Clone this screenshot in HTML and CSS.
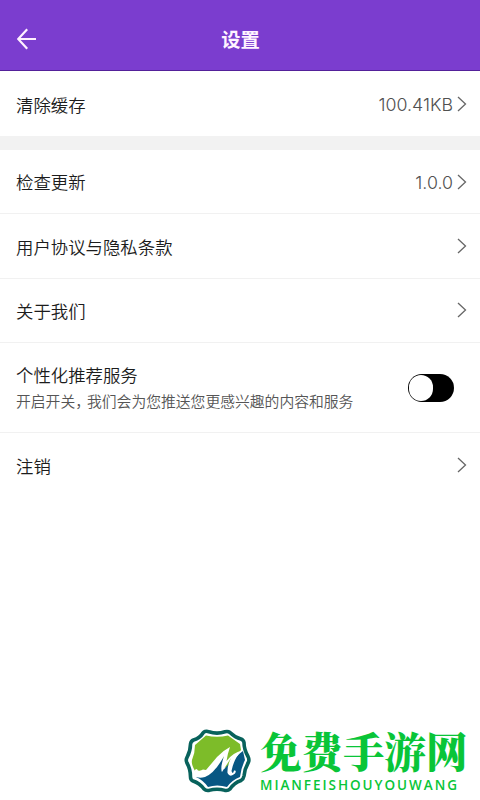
FILE: index.html
```html
<!DOCTYPE html>
<html lang="zh-CN">
<head>
<meta charset="utf-8">
<title>设置</title>
<link rel="stylesheet" href="styles.css">
</head>
<body>
<header class="bar">
  <svg class="back" width="20" height="22" viewBox="0 0 20 22"><path d="M10.2 1.3L1.2 11l9 9.7M1.5 11H19"/></svg>
  <h1>设置</h1>
</header>
<main>
  <div class="row first"><span>清除缓存</span><span class="value">100.41KB</span><svg class="chev" viewBox="0 0 10 16"><path d="M1 1l7.5 7L1 15"/></svg></div>
  <div class="gap"></div>
  <div class="row"><span>检查更新</span><span class="value">1.0.0</span><svg class="chev" viewBox="0 0 10 16"><path d="M1 1l7.5 7L1 15"/></svg></div>
  <div class="row"><span>用户协议与隐私条款</span><svg class="chev" viewBox="0 0 10 16"><path d="M1 1l7.5 7L1 15"/></svg></div>
  <div class="row"><span>关于我们</span><svg class="chev" viewBox="0 0 10 16"><path d="M1 1l7.5 7L1 15"/></svg></div>
  <div class="row tall">
    <div><div class="name">个性化推荐服务</div><div class="note">开启开关<span class="comma">，</span>我们会为您推送您更感兴趣的内容和服务</div></div>
    <div class="switch"><div class="knob"></div></div>
  </div>
  <div class="row last"><span>注销</span><svg class="chev" viewBox="0 0 10 16"><path d="M1 1l7.5 7L1 15"/></svg></div>
</main>
<footer class="brand">
  <svg width="68" height="68" viewBox="0 0 68 68">
    <path d="M21 4.5Q23 4 25 4.8Q33 7.500 41 4.800Q44 4 46 5.500Q51 10.500 57 12Q59.500 13 60 15.500Q60 22.500 64 29.500Q65.500 32.500 64.500 35Q60.500 42 60 49Q59.500 52 57 53.500Q50 56 46 62Q44 64 41 63.400Q33 61 25 63.400Q22 64 20 62Q15.500 56 9 54Q6.500 53 6.500 50Q6.500 42 3 36Q1.500 33 3 30.500Q6.500 24 6.500 17Q7 14 9.500 13Q16 11 19 6Q20 4.800 21 4.500Z" fill="#fff" stroke="#08625c" stroke-width="3.6"/>
    <path d="M11 44Q7 37 8 33Q11 26 11 18L22 8.500Q33 11 44 8.500L56 17L57 23L43 40L20 48Z" fill="#7dbc29"/>
    <path d="M12 50L26 46L40 30L40 42L55 27L59 24L61 33Q57 41 56 50Q48 53 43 60Q33 57 24 60Q19 53 12 50Z" fill="#075783"/>
    <path d="M10.500 43.500Q12.500 40.500 14 43.500Q17 44 19 42.500L22 43Q28 36 33 30Q39 23.500 46 20Q43.500 27 42.500 34Q49 25.500 58 23.500Q50 31 47.500 44Q49 48 50 43.500Q53 43 51 46.500Q46 51 43.500 46Q43 39 47 31L38 45Q36 41 40 29Q31 46 21 50Q15 52 10 49Q13 47 10.500 43.500Z" fill="#fff"/>
  </svg>
  <div class="words"><div class="cn">免费手游网</div><div class="en">MIANFEISHOUYOUWANG</div></div>
</footer>
</body>
</html>
```

FILE: styles.css
```css
* { box-sizing: border-box; }
body {
  margin: 0;
  height: 800px;
  display: flex;
  flex-direction: column;
  overflow: hidden;
  background: #fff;
  color: #1c1c1c;
  font-family: "Noto Sans CJK SC", sans-serif;
  font-weight: 350;
}
.bar {
  height: 71px;
  padding: 8px 16px 0 17px;
  display: grid;
  grid-template-columns: 20px 1fr 20px;
  align-items: center;
  background: #7b3dcf;
  border-bottom: 1px solid #54219a;
}
.bar h1 {
  margin: 0;
  color: #fff3ff;
  font-size: 19.3px;
  line-height: 28px;
  font-weight: 700;
  text-align: center;
}
.back { fill: none; stroke: #fff0ff; stroke-width: 2.2; }
.row {
  height: 64.4px;
  padding: 1px 13px 0 16px;
  display: flex;
  align-items: center;
  border-bottom: 1px solid #f1f1f1;
  font-size: 17.4px;
  line-height: 26px;
}
.first { height: 65px; padding-top: 2px; border: 0; }
.gap { height: 14px; background: #f2f2f2; }
.value { margin: 1px 0 0 auto; color: #505050; font-family: Inter, sans-serif; font-size: 17.8px; font-weight: 300; }
.chev {
  width: 10px;
  height: 16px;
  flex: none;
  margin: -1px 0 0 auto;
  fill: none;
  stroke: #666;
  stroke-width: 1.3;
}
.value + .chev { margin-left: 4px; }
.tall { height: 90px; justify-content: space-between; padding-right: 26px; }
.note { color: #555; font-size: 14.8px; line-height: 26px; white-space: nowrap; }
.comma { letter-spacing: -3px; }
.switch { width: 46px; height: 28px; padding: 1px; border-radius: 14px; background: #000; }
.knob { width: 24px; height: 26px; border-radius: 13px; background: #fff; }
.last { border: 0; }
.brand {
  margin-top: auto;
  height: 76px;
  padding-left: 184px;
  display: flex;
  align-items: flex-start;
}
.brand svg { flex: none; margin-top: 3px; }
.words { margin-left: 8px; color: #09c538; white-space: nowrap; }
.cn { font-family: "Noto Serif CJK SC", "Noto Sans CJK SC", serif; font-size: 41.5px; line-height: 53px; font-weight: 900; }
.en { font-family: "Open Sans", sans-serif; font-size: 13.5px; line-height: 16px; font-weight: 600; letter-spacing: 1.95px; }
```
